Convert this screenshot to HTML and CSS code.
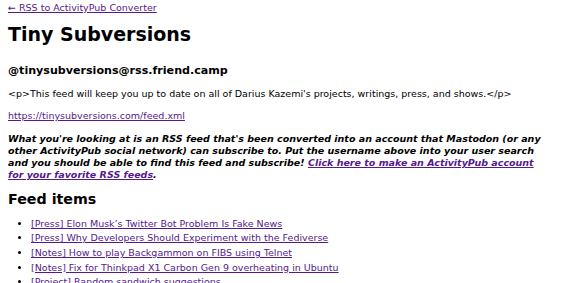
FILE: index.html
```html
<!DOCTYPE html>
<html>
<head>
<meta charset="utf-8">
<link rel="stylesheet" href="styles.css">
</head>
<body>
<a class="back" href="#">← RSS to ActivityPub Converter</a>
<h1 class="title">Tiny Subversions</h1>
<h3 class="handle">@tinysubversions@rss.friend.camp</h3>
<p class="desc">&lt;p&gt;This feed will keep you up to date on all of Darius Kazemi's projects, writings, press, and shows.&lt;/p&gt;</p>
<p class="url"><a href="#">https://tinysubversions.com/feed.xml</a></p>
<p class="note">What you're looking at is an RSS feed that's been converted into an account that Mastodon (or any other ActivityPub social network) can subscribe to. Put the username above into your user search and you should be able to find this feed and subscribe! <a href="#">Click here to make an ActivityPub account for your favorite RSS feeds</a>.</p>
<h2 class="section">Feed items</h2>
<ul class="items">
<li><a href="#">[Press] Elon Musk’s Twitter Bot Problem Is Fake News</a></li>
<li><a href="#">[Press] Why Developers Should Experiment with the Fediverse</a></li>
<li><a href="#">[Notes] How to play Backgammon on FIBS using Telnet</a></li>
<li><a href="#">[Notes] Fix for Thinkpad X1 Carbon Gen 9 overheating in Ubuntu</a></li>
<li><a href="#">[Project] Random sandwich suggestions</a></li>
<li><a href="#">[Project] Another item</a></li>
</ul>
</body>
</html>
```
FILE: styles.css
```css
html, body {
  margin: 0;
  padding: 0;
  background: #fff;
}
body {
  padding: 0 8px;
  font-family: "DejaVu Sans", sans-serif;
  font-size: 9.5px;
  line-height: 11.6px;
  color: #000;
}
a {
  color: #551a8b;
}
.back {
  display: block;
  margin-top: 2px;
}
.title {
  font-size: 19px;
  line-height: 22px;
  margin: 9px 0 0;
}
.handle {
  font-size: 11.1px;
  line-height: 13px;
  margin: 19px 0 0;
}
.desc {
  margin: 11px 0 0;
}
.url {
  margin: 11px 0 0;
}
.note {
  max-width: 538px;
  font-weight: bold;
  font-style: italic;
  line-height: 12px;
  margin: 11px 0 0;
}
.section {
  font-size: 14.25px;
  line-height: 17px;
  margin: 10px 0 0;
}
.items {
  margin: 10px 0 0;
  padding-left: 23px;
}
.items li {
  line-height: 12px;
  margin-bottom: 2.6px;
}
```
